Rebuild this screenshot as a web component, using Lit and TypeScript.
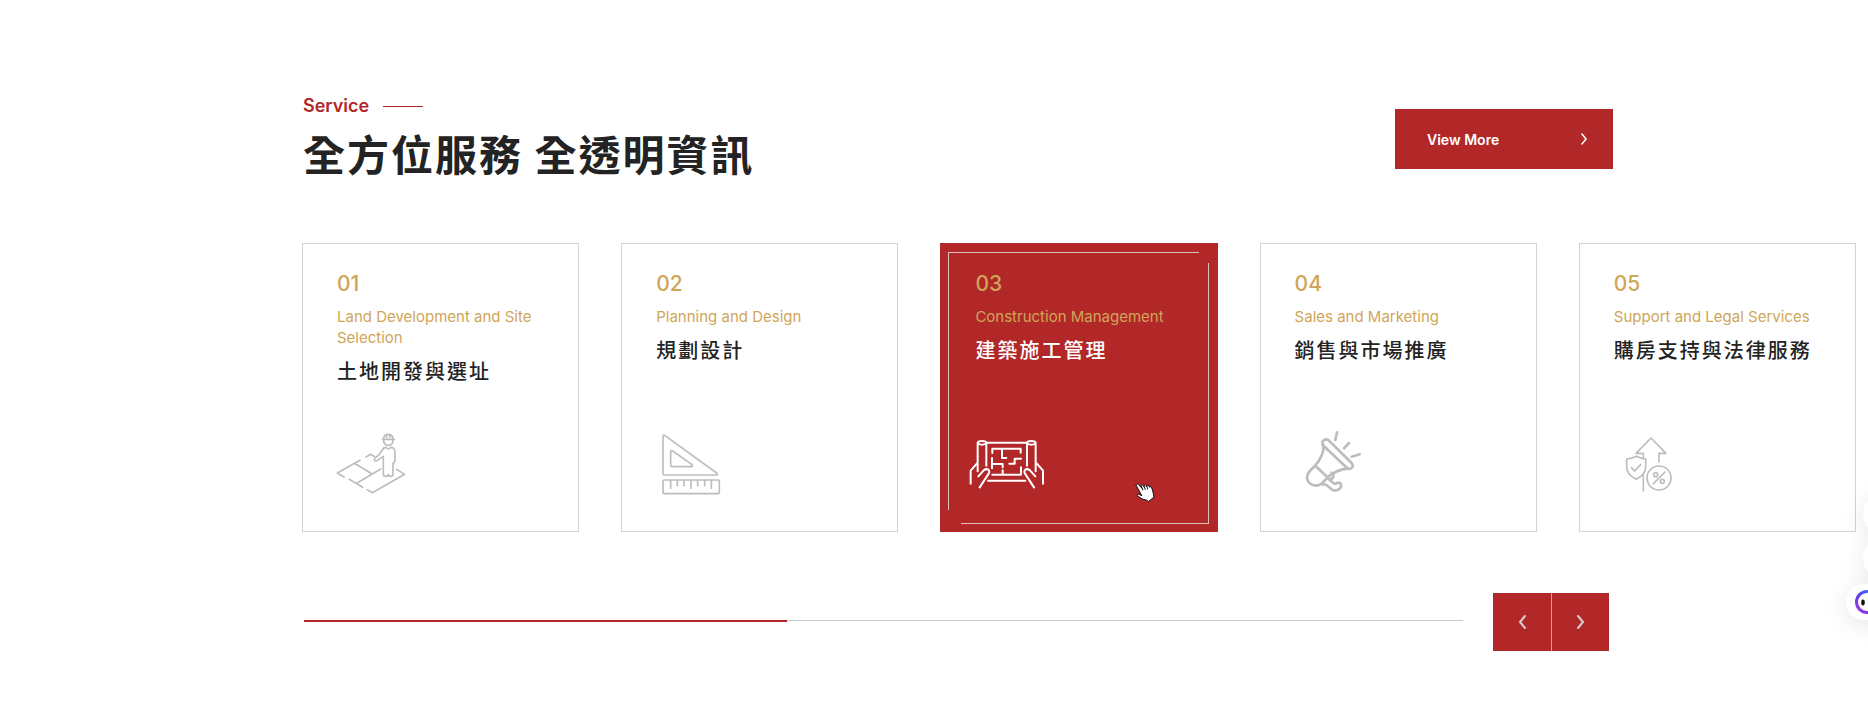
import { LitElement, html, css, svg, nothing } from "lit";
import { customElement, state } from "lit/decorators.js";
import { classMap } from "lit/directives/class-map.js";

interface Service {
  no: string;
  name: string;
  title: string;
  viewBox: string;
  stroke: number;
  art: unknown;
}

const surveyor = svg`
  <path d="M90 106 22 144l20 12M58 163l40 24M112 194l15 9 97-55-24-15M108 96l14-8 12 7M73 115l50 30M80 175l72-43"/>
  <path d="M161 42q0-14 14-14t14 14v5q-1 14-14 14t-14-14zM157 43h36M170 29v8M180 29v8"/>
  <path d="M168 67q7 9 14 0 12 0 13 12v26q0 8-6 9v32q0 8-7 8-5 0-7-5-2 5-8 5-7 0-7-8V94l-19 13q-7 3-8-3 0-4 4-6 12-8 19-22 4-9 12-9z"/>`;

const rulers = svg`
  <path d="M159 620q0-5 5-2l156 113q5 6-1 6H162q-3 0-3-3z"/>
  <path d="M182 667q0-6 6-2l58 41q4 6-2 6h-58q-4 0-4-4z"/>
  <rect x="159" y="752" width="169" height="41" rx="4"/>
  <path d="M182 753v24M202 753v16M222 753v16M243 753v24M263 753v16M284 753v16M304 753v24"/>`;

const blueprint = svg`
  <path d="M54 126V41q0-6 13-6t13 6v68M54 41q3 5 13 5t13-5"/>
  <path d="M228 126V41q0-6-13-6t-13 6v68M228 41q-3 5-13 5t-13-5"/>
  <path d="M80 40h122M85 154h112" />
  <path d="M98 71V58h85v12M127 59v27h13M97 86v31M98 104h31v10M184 88h-19v15h-16M184 114v22H98M129 123v13"/>
  <path d="M52 102 33 124v39M231 102l19 22v39M56 141l16-18q8-6 14-2 5 5 1 12l-27 41M227 141l-16-18q-8-6-14-2-5 5-1 12l27 41"/>`;

const megaphone = svg`
  <path d="m98 60q-3-10 4-15 8-4 14 1l69 68q6 8 1 14-6 6-14 2z"/>
  <path d="M101 62q0 31-26 60l-18 19q-12 17 1 33 18 15 37 2l18-19q28-24 61-26M76 122l38 36"/>
  <path d="M125 143q7 6 5 12-3 8-12 8M113 160l20 16q4 2 8-2 9-3 12 3 2 7-3 13-9 10-22 5l-19-15q-5-3-11-2"/>
  <path d="m136 45 5-23M162 70l15-16M185 95l24-7"/>`;

const growth = svg`
  <path d="M297 696v-26h21l-45-46-45 46h22v13M250 732v50"/>
  <path d="M200 687q16-1 29-8 13 7 28 8v23q0 24-28 38-29-14-29-38zM214 713l10 10 18-19"/>
  <circle cx="297" cy="744" r="36"/>
  <circle cx="287" cy="734" r="6"/><circle cx="307" cy="754" r="6"/>
  <path d="m280 761 35-35"/>`;

const SERVICES: Service[] = [
  { no: "01", name: "Land Development and Site Selection", title: "土地開發與選址", viewBox: "3 9 240 216", stroke: 5, art: surveyor },
  { no: "02", name: "Planning and Design", title: "規劃設計", viewBox: "120 596 240 216", stroke: 5, art: rulers },
  { no: "03", name: "Construction Management", title: "建築施工管理", viewBox: "28 -4 240 216", stroke: 6, art: blueprint },
  { no: "04", name: "Sales and Marketing", title: "銷售與市場推廣", viewBox: "-3 9 240 216", stroke: 8, art: megaphone },
  { no: "05", name: "Support and Legal Services", title: "購房支持與法律服務", viewBox: "144 594 240 216", stroke: 5, art: growth },
];

@customElement("app-root")
export class AppRoot extends LitElement {
  @state() private active = 2;

  static styles = css`
    :host {
      --red: #b22829;
      --gold: #cfa558;
      --ink: #232323;
      display: block;
      position: relative;
      overflow: hidden;
      background: #fff;
      color: var(--ink);
      font-family: Inter, "Noto Sans CJK TC", sans-serif;
    }
    *, *::before, *::after { box-sizing: border-box; }
    h2, h3, p, ul { margin: 0; padding: 0; font-weight: inherit; }
    button { border: 0; padding: 0; font: inherit; cursor: pointer; }
    svg { display: block; fill: none; stroke: currentColor; stroke-linecap: round; stroke-linejoin: round; }

    .section { padding: 92px 12px 69px 302px; }
    .head, .foot { display: flex; align-items: center; margin-right: 243px; }
    .head { justify-content: space-between; padding-left: 1px; }
    .eyebrow {
      display: flex; align-items: center; gap: 14px;
      color: var(--red); font-size: 18px; line-height: 28px; font-weight: 600;
    }
    .eyebrow::after { content: ""; width: 40px; height: 1px; background: var(--red); }
    .heading {
      font-family: "Noto Sans CJK TC", sans-serif;
      font-size: 42px; line-height: 66px; font-weight: 700; letter-spacing: 2px;
    }
    .more {
      display: flex; align-items: center; justify-content: space-between;
      width: 218px; height: 60px; padding: 0 26px 0 32px;
      background: var(--red); color: #fff; text-decoration: none;
      font-size: 14px; font-weight: 600;
    }
    .cards {
      display: grid; grid-template-columns: repeat(5, minmax(0, 1fr)); gap: 42px;
      margin-top: 57px; list-style: none;
    }
    .card {
      position: relative; display: flex; flex-direction: column;
      height: 289px; padding: 24px 28px 31px 34px;
      border: 1px solid #d3d3d3; color: var(--ink);
    }
    .no { color: var(--gold); font-size: 21px; line-height: 32px; font-weight: 500; }
    .name { margin-top: 6px; color: var(--gold); font-size: 15px; line-height: 21px; }
    .title {
      margin-top: 8px; white-space: nowrap;
      font-family: "Noto Sans CJK TC", sans-serif;
      font-size: 20px; line-height: 30px; font-weight: 500; letter-spacing: 2px;
    }
    .art { width: 80px; height: 72px; margin: auto 0 0 -6px; color: #bdbdbd; }
    .card.on { background: var(--red); border-color: var(--red); }
    .card.on .title, .card.on .art { color: #fff; }
    .frame { position: absolute; border: 0 solid #e6bdbd; pointer-events: none; }
    .frame.tl { inset: 8px 18px 21px 7px; border-width: 1px 0 0 1px; }
    .frame.br { inset: 19px 8px 7px 20px; border-width: 0 1px 1px 0; }
    .hand { position: absolute; right: 62px; bottom: 28px; width: 20px; height: 20px; }

    .foot { gap: 30px; margin-top: 61px; padding: 0 4px 0 2px; }
    .bar { flex: 1; height: 2px; margin-bottom: 2px; background: linear-gradient(#cbcbcb 50%, transparent 50%); }
    .fill { height: 2px; background: var(--red); }
    .nav { display: flex; gap: 1px; background: #dc9a9a; }
    .arrow { display: grid; place-items: center; width: 58px; height: 58px; background: var(--red); color: #d8cccc; }
    .arrow:last-child { width: 57px; }

    .dock {
      position: absolute; top: 494px; right: -35px;
      display: flex; flex-direction: column; gap: 4px;
    }
    .bubble {
      width: 40px; height: 40px; border-radius: 20px; background: #fff; color: #111;
      box-shadow: 0 4px 24px rgba(0, 0, 0, 0.1);
    }
    .bubble.bot { display: grid; place-items: center start; width: 57px; height: 36px; margin: 2px 0 0 -17px; padding-left: 9px; }
  `;

  private move(step: number) {
    this.active = (this.active + step + SERVICES.length) % SERVICES.length;
  }

  private card(s: Service, i: number) {
    const on = i === this.active;
    return html`
      <li class=${classMap({ card: true, on })} @mouseenter=${() => (this.active = i)}>
        <p class="no">${s.no}</p>
        <p class="name">${s.name}</p>
        <h3 class="title">${s.title}</h3>
        <svg class="art" viewBox=${s.viewBox} stroke-width=${s.stroke} aria-hidden="true">${s.art}</svg>
        ${on
          ? html`<span class="frame tl"></span><span class="frame br"></span>
              <svg class="hand" viewBox="0 0 20 20" aria-hidden="true">
                <path fill="#fff" stroke="#111" d="M1 1.5q1-1.3 2.2-.2L7 5.2l-.6-2.4q.9-1.6 2.2.1l.6 1.3Q9 1.6 10.2 1.6q1 .2 1.6 2.2.2-1.8 1.4-1.5 1 .3 1.4 2 .6-1.3 1.5-.4 1.8 2.8 2.1 6.3l.8 4-5.5 4.3-1.8-1.3-4.5-1.2L2.2 12.7q-.3-1.7 1.6-1.4l2.7 1.2z"/>
                <path stroke="#111" d="m7 5 .8 2M9.5 4.5l.7 2M12 4l.6 2"/>
              </svg>`
          : nothing}
      </li>`;
  }

  render() {
    const right = html`<svg width="8" height="14" viewBox="0 0 8 14" stroke-width="2" aria-hidden="true"><path d="m1 1 5 6-5 6"/></svg>`;
    const left = html`<svg width="8" height="14" viewBox="0 0 8 14" stroke-width="2" aria-hidden="true"><path d="M7 1 2 7l5 6"/></svg>`;
    return html`
      <section class="section">
        <header class="head">
          <div>
            <p class="eyebrow">Service</p>
            <h2 class="heading">全方位服務 全透明資訊</h2>
          </div>
          <a class="more" href="#services">View More
            <svg width="6" height="12" viewBox="0 0 6 12" stroke-width="1.5" aria-hidden="true"><path d="m1 1 4 5-4 5"/></svg>
          </a>
        </header>
        <ul class="cards" id="services">${SERVICES.map((s, i) => this.card(s, i))}</ul>
        <div class="foot">
          <div class="bar"><div class="fill" style="width:${(5 / 12) * 100}%"></div></div>
          <div class="nav">
            <button class="arrow" aria-label="Previous" @click=${() => this.move(-1)}>${left}</button>
            <button class="arrow" aria-label="Next" @click=${() => this.move(1)}>${right}</button>
          </div>
        </div>
      </section>
      <div class="dock">
        <button class="bubble" aria-label="Share"></button>
        <button class="bubble" aria-label="Contact"></button>
        <button class="bubble bot" aria-label="Assistant">
          <svg width="24" height="24" viewBox="0 0 24 24" aria-hidden="true">
            <defs><linearGradient id="ring" x1="0" y1="1" x2="1" y2="0">
              <stop offset="0" stop-color="#b03ad8"/><stop offset="0.4" stop-color="#5a3df0"/><stop offset="1" stop-color="#3a7bff"/>
            </linearGradient></defs>
            <circle cx="12" cy="12" r="10.5" stroke="url(#ring)" stroke-width="3"/>
            <ellipse cx="8" cy="12.5" rx="1.8" ry="3" fill="#111" stroke="none"/>
            <ellipse cx="16" cy="12.5" rx="1.8" ry="3" fill="#111" stroke="none"/>
          </svg>
        </button>
      </div>`;
  }
}
